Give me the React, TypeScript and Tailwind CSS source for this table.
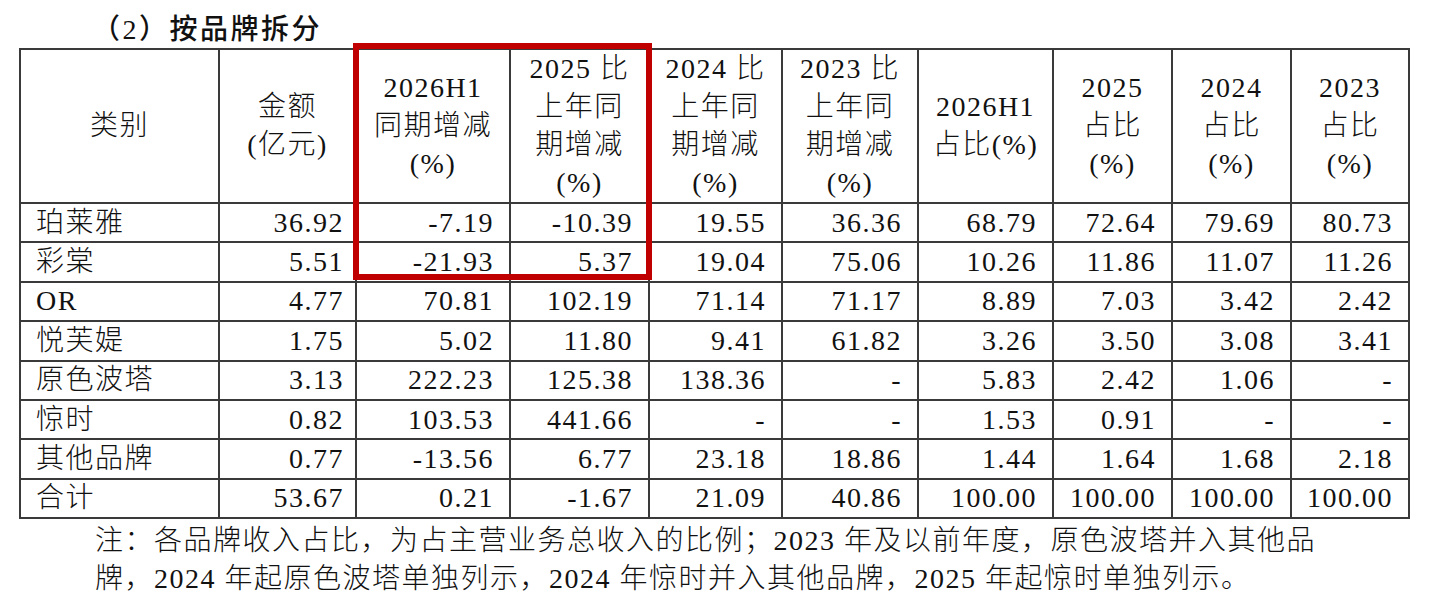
import React from 'react';

const cols = [
  'w-[199px]',
  'w-[137px]',
  'w-[154px]',
  'w-[139px]',
  'w-[133px]',
  'w-[136px]',
  'w-[135px]',
  'w-[119px]',
  'w-[119px]',
  'w-[118px]',
];

const headers: string[][] = [
  ['类别'],
  ['金额', '(亿元)'],
  ['2026H1', '同期增减', '(%)'],
  ['2025 比', '上年同', '期增减', '(%)'],
  ['2024 比', '上年同', '期增减', '(%)'],
  ['2023 比', '上年同', '期增减', '(%)'],
  ['2026H1', '占比(%)'],
  ['2025', '占比', '(%)'],
  ['2024', '占比', '(%)'],
  ['2023', '占比', '(%)'],
];

const rows: string[][] = [
  ['珀莱雅', '36.92', '-7.19', '-10.39', '19.55', '36.36', '68.79', '72.64', '79.69', '80.73'],
  ['彩棠', '5.51', '-21.93', '5.37', '19.04', '75.06', '10.26', '11.86', '11.07', '11.26'],
  ['OR', '4.77', '70.81', '102.19', '71.14', '71.17', '8.89', '7.03', '3.42', '2.42'],
  ['悦芙媞', '1.75', '5.02', '11.80', '9.41', '61.82', '3.26', '3.50', '3.08', '3.41'],
  ['原色波塔', '3.13', '222.23', '125.38', '138.36', '-', '5.83', '2.42', '1.06', '-'],
  ['惊时', '0.82', '103.53', '441.66', '-', '-', '1.53', '0.91', '-', '-'],
  ['其他品牌', '0.77', '-13.56', '6.77', '23.18', '18.86', '1.44', '1.64', '1.68', '2.18'],
  ['合计', '53.67', '0.21', '-1.67', '21.09', '40.86', '100.00', '100.00', '100.00', '100.00'],
];

export default function App() {
  return (
    <div className="w-[1432px] h-[595px] bg-white text-[#111] font-['Liberation_Serif','Noto_Sans_CJK_SC',serif] font-light text-[28px] tracking-[1.5px] overflow-hidden">
      {/* 标题 */}
      <div className="pl-[92px] pt-[12px] leading-[36px] font-medium tracking-[2.5px]">（2）按品牌拆分</div>

      <div className="relative ml-[19px] w-[1389px]">
        <table className="table-fixed w-[1389px] border-collapse border-2 border-[#3a3a3a]">
          <colgroup>
            {cols.map((c, i) => (
              <col key={i} className={c} />
            ))}
          </colgroup>
          <thead>
            <tr className="h-[153px]">
              {headers.map((lines, i) => (
                <th
                  key={i}
                  className="border-2 border-[#3a3a3a] p-0 text-center align-middle font-light leading-[38px]"
                >
                  {lines.map((l, j) => (
                    <div key={j}>{l}</div>
                  ))}
                </th>
              ))}
            </tr>
          </thead>
          <tbody>
            {rows.map((r, i) => (
              <tr key={i} className="h-[39.4px]">
                {r.map((v, j) => (
                  <td
                    key={j}
                    className={
                      'border-2 border-[#3a3a3a] py-0 leading-[34px] whitespace-nowrap ' +
                      (j === 0 ? 'text-left pl-[15px]' : j === 1 ? 'text-right pr-[11px]' : 'text-right pr-[15px]')
                    }
                  >
                    {v}
                  </td>
                ))}
              </tr>
            ))}
          </tbody>
        </table>

        {/* 红框标注 */}
        <div className="absolute left-[334px] top-[-5px] w-[299px] h-[237px] border-[6px] border-[#c00000] pointer-events-none" />
      </div>

      {/* 注释 */}
      <div className="pl-[95px] mt-[3px] leading-[38px]">
        <div>注：各品牌收入占比，为占主营业务总收入的比例；2023 年及以前年度，原色波塔并入其他品</div>
        <div>牌，2024 年起原色波塔单独列示，2024 年惊时并入其他品牌，2025 年起惊时单独列示。</div>
      </div>
    </div>
  );
}
